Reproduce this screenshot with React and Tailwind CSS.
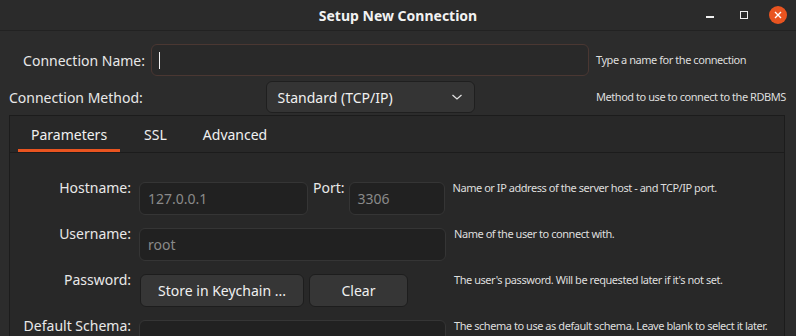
import React from "react";

const font = { fontFamily: '"Noto Sans", "Open Sans", sans-serif' };

const Field = ({ className = "", children }) => (
  <div className={`h-[33px] rounded-[6px] border border-[#353535] bg-[#212121] flex items-center px-[8px] text-[14px] text-[#8a8a8a] ${className}`}>
    {children}
  </div>
);

const Button = ({ className = "", children }) => (
  <div className={`h-[33px] rounded-[6px] border border-[#1d1d1d] bg-[#363636] flex items-center justify-center text-[14px] text-[#f0f0f0] ${className}`}>
    {children}
  </div>
);

const Hint = ({ children }) => (
  <div className="text-[11px] leading-[16px] text-[#dedede] mt-[-2px] whitespace-nowrap tracking-[-0.45px]">{children}</div>
);

const Label = ({ children }) => (
  <div className="w-[121px] text-right text-[14px] leading-[20px] text-[#e8e8e8] mt-[-4px] whitespace-nowrap">{children}</div>
);

export default function App() {
  return (
    <div className="w-[796px] h-[336px] overflow-hidden bg-[#2c2c2c] text-[#e8e8e8]" style={font}>
      {/* title bar */}
      <div className="h-[31px] grid grid-cols-[1fr_auto_1fr] items-center border-b border-[#222222] bg-[#2b2b2b]">
        <div />
        <div className="text-[14px] font-bold text-[#f2f2f2] pt-[1px] tracking-[0px]">Setup New Connection</div>
        <div className="flex items-center justify-end pr-[9px]">
          <div className="w-[34px] flex justify-center pt-[4px]">
            <div className="w-[8px] h-[2px] bg-[#f0f0f0]" />
          </div>
          <div className="w-[34px] mr-[8px] flex justify-center">
            <div className="w-[8px] h-[8px] border border-[#f0f0f0]" />
          </div>
          <div className="w-[18px] h-[18px] rounded-full bg-[#e95420] flex items-center justify-center">
            <svg width="8" height="8" viewBox="0 0 8 8">
              <path d="M1 1L7 7M7 1L1 7" stroke="#ffffff" strokeWidth="1.4" />
            </svg>
          </div>
        </div>
      </div>

      {/* connection name */}
      <div className="flex items-center mt-[13px] h-[32px]">
        <div className="w-[145px] text-right text-[14px] whitespace-nowrap">Connection Name:</div>
        <div className="ml-[6px] w-[438px] h-[32px] rounded-[6px] border border-[#4a3732] bg-[#292929] flex items-center pl-[7px]">
          <div className="w-[1px] h-[17px] bg-[#f0f0f0]" />
        </div>
        <div className="ml-[7px] text-[11px] text-[#dedede] tracking-[-0.45px] whitespace-nowrap">Type a name for the connection</div>
      </div>

      {/* connection method */}
      <div className="flex items-center mt-[5px] h-[32px]">
        <div className="w-[145px] pl-[9px] text-left text-[14px] whitespace-nowrap">Connection Method:</div>
        <div className="ml-[6px] w-[438px] flex justify-center">
          <div className="w-[209px] h-[32px] rounded-[6px] border border-[#1f1f1f] bg-[#343434] flex items-center justify-between pl-[11px] pr-[11px] text-[14px] text-[#f0f0f0]">
            <span>Standard (TCP/IP)</span>
            <svg width="12" height="8" viewBox="0 0 12 8">
              <path d="M1.5 2L6 6L10.5 2" stroke="#e0e0e0" strokeWidth="1.3" fill="none" />
            </svg>
          </div>
        </div>
        <div className="ml-[7px] text-[11px] text-[#dedede] tracking-[-0.45px] whitespace-nowrap">Method to use to connect to the RDBMS</div>
      </div>

      {/* tab panel */}
      <div className="ml-[9px] mt-[2px] w-[776px] h-[230px] border border-[#1c1c1c] bg-[#282828]">
        <div className="h-[37px] border-b border-[#1c1c1c] flex items-end pl-[8px] text-[14px]">
          <div className="px-[13px] h-full flex flex-col justify-between">
            <div className="pt-[8px] text-[#f0f0f0]">Parameters</div>
            <div className="h-[3px] bg-[#e95420] mx-[-13px]" />
          </div>
          <div className="ml-[12px] px-[12px] h-full pt-[8px] text-[#f0f0f0]">SSL</div>
          <div className="ml-[12px] px-[12px] h-full pt-[8px] text-[#f0f0f0]">Advanced</div>
        </div>

        <div className="pt-[29px] flex flex-col gap-[13px]">
          <div className="flex items-start">
            <Label>Hostname:</Label>
            <Field className="ml-[8px] w-[169px]">127.0.0.1</Field>
            <div className="ml-[5px] text-[14px] leading-[20px] mt-[-4px]">Port:</div>
            <Field className="ml-[4px] w-[96px]">3306</Field>
            <div className="ml-[8px]"><Hint>Name or IP address of the server host - and TCP/IP port.</Hint></div>
          </div>
          <div className="flex items-start">
            <Label>Username:</Label>
            <Field className="ml-[8px] w-[307px]">root</Field>
            <div className="ml-[8px]"><Hint>Name of the user to connect with.</Hint></div>
          </div>
          <div className="flex items-start">
            <Label>Password:</Label>
            <Button className="ml-[9px] w-[164px]">Store in Keychain ...</Button>
            <Button className="ml-[5px] w-[99px]">Clear</Button>
            <div className="ml-[46px]"><Hint>The user's password. Will be requested later if it's not set.</Hint></div>
          </div>
          <div className="flex items-start">
            <Label>Default Schema:</Label>
            <Field className="ml-[8px] w-[307px]"></Field>
            <div className="ml-[8px]"><Hint>The schema to use as default schema. Leave blank to select it later.</Hint></div>
          </div>
        </div>
      </div>
    </div>
  );
}
